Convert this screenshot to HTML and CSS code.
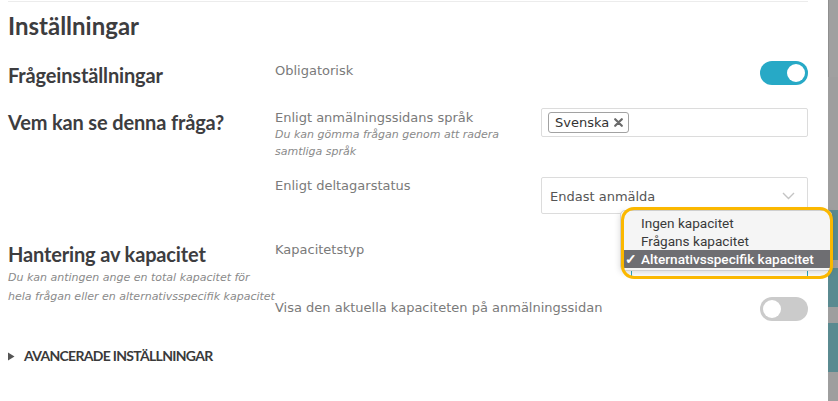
FILE: index.html
```html
<!DOCTYPE html>
<html lang="sv">
<head>
<meta charset="utf-8">
<title>Inställningar</title>
<link rel="stylesheet" href="styles.css">
</head>
<body>
<div class="page">
  <main class="panel">
    <div class="panel-inner">
      <h1 class="title">Inställningar</h1>

      <section class="group group-1">
        <div class="group-head"><h2 class="group-title">Frågeinställningar</h2></div>
        <div class="fields">
          <div class="field">
            <div class="label-cell"><span class="label">Obligatorisk</span></div>
            <div class="control control-right"><span class="toggle toggle-on"><span class="knob"></span></span></div>
          </div>
        </div>
      </section>

      <section class="group group-2">
        <div class="group-head"><h2 class="group-title">Vem kan se denna fråga?</h2></div>
        <div class="fields">
          <div class="field">
            <div class="label-cell">
              <span class="label">Enligt anmälningssidans språk</span>
              <p class="hint">Du kan gömma frågan genom att radera samtliga språk</p>
            </div>
            <div class="control">
              <div class="tag-input">
                <span class="tag">Svenska
                  <svg class="tag-x" width="9" height="9" viewBox="0 0 9 9"><path d="M1.2 1.2 L7.8 7.8 M7.8 1.2 L1.2 7.8" stroke="#6a6a6a" stroke-width="2.2" stroke-linecap="round"/></svg>
                </span>
              </div>
            </div>
          </div>
          <div class="field field-2b">
            <div class="label-cell pad1"><span class="label">Enligt deltagarstatus</span></div>
            <div class="control">
              <div class="select">
                <span class="select-value">Endast anmälda</span>
                <svg class="chevron" width="13" height="8" viewBox="0 0 13 8"><path d="M1 1 L6.5 6.5 L12 1" fill="none" stroke="#c4c4c4" stroke-width="1.4"/></svg>
              </div>
            </div>
          </div>
        </div>
      </section>

      <section class="group group-3">
        <div class="group-head">
          <h2 class="group-title">Hantering av kapacitet</h2>
          <p class="hint hint-wide">Du kan antingen ange en total kapacitet för hela frågan eller en alternativsspecifik kapacitet</p>
        </div>
        <div class="fields">
          <div class="field">
            <div class="label-cell"><span class="label">Kapacitetstyp</span></div>
            <div class="control control-right">
              <div class="select select-focus"></div>
            </div>
          </div>
          <div class="field field-3b">
            <div class="label-cell pad3"><span class="label">Visa den aktuella kapaciteten på anmälningssidan</span></div>
            <div class="control control-right"><span class="toggle"><span class="knob"></span></span></div>
          </div>
        </div>
      </section>

      <div class="advanced">
        <svg class="caret" width="7" height="9" viewBox="0 0 7 9"><path d="M0 0.5 L6.5 4.5 L0 8.5 Z" fill="#555"/></svg>
        <span class="advanced-text">AVANCERADE INSTÄLLNINGAR</span>
      </div>
    </div>
  </main>

  <aside class="strip">
    <div class="seg seg-thumb"></div>
    <div class="seg seg-gray s1"></div>
    <div class="seg seg-teal s2"></div>
    <div class="seg seg-gray s3"></div>
    <div class="seg seg-teal s4"></div>
    <div class="seg seg-gray s5"></div>
    <div class="seg seg-teal s6"></div>
    <div class="seg seg-gray s7"></div>
  </aside>

  <div class="menu">
    <div class="menu-item">Ingen kapacitet</div>
    <div class="menu-item">Frågans kapacitet</div>
    <div class="menu-item menu-item-selected"><span class="check">✓</span>Alternativsspecifik kapacitet</div>
  </div>
  <div class="focus-ring"></div>
</div>
</body>
</html>
```

FILE: styles.css
```css
* { box-sizing: border-box; }

html, body {
  margin: 0;
  padding: 0;
  background: #fff;
}

.page {
  position: relative;
  display: flex;
  width: 838px;
  height: 401px;
  overflow: hidden;
}

.panel {
  flex: none;
  width: 828px;
  padding: 1px 20px 0 8px;
  background: #fff;
}

.panel-inner {
  border-top: 1px solid #ececec;
}

.title {
  margin: 9px 0 0;
  font-family: Lato, "Liberation Sans", sans-serif;
  font-weight: 700;
  font-size: 24px;
  line-height: 30px;
  color: #3d3d3f;
}

.group {
  display: grid;
  grid-template-columns: 267px 1fr;
}

.group-1 { margin-top: 20px; }
.group-2 { margin-top: 21px; }
.group-3 { margin-top: 26px; }

.group-title {
  margin: 0;
  padding-top: 2px;
  font-family: Lato, "Liberation Sans", sans-serif;
  font-weight: 700;
  font-size: 20px;
  letter-spacing: -0.15px;
  line-height: 24px;
  color: #3d3d3f;
}

.fields {
  display: flex;
  flex-direction: column;
}

.field {
  display: grid;
  grid-template-columns: 266px 267px;
  align-items: start;
}

.field-2b { margin-top: 17px; }
.field-3b { margin-top: 19px; }

.label-cell { padding-top: 2px; }
.label-cell.pad1 { padding-top: 1px; }
.label-cell.pad3 { padding-top: 3px; }

.label {
  display: block;
  font-family: "DejaVu Sans", Verdana, sans-serif;
  font-size: 13px;
  line-height: 16px;
  color: #7a7a7a;
  white-space: nowrap;
}

.hint {
  margin: 0;
  font-family: "DejaVu Sans", Verdana, sans-serif;
  font-style: italic;
  font-size: 11px;
  line-height: 17px;
  color: #8a8a8a;
  width: 240px;
}

.hint-wide {
  margin-top: 2px;
  width: 267px;
  line-height: 19px;
  white-space: normal;
}

.control { display: flex; }
.control-right { justify-content: flex-end; }

.toggle {
  position: relative;
  display: block;
  width: 48px;
  height: 24px;
  border-radius: 12px;
  background: #cbcbcb;
}

.toggle .knob {
  position: absolute;
  top: 3px;
  left: 3px;
  width: 18px;
  height: 18px;
  border-radius: 50%;
  background: #fff;
}

.toggle-on { background: #27a9c6; }
.toggle-on .knob { left: 27px; }

.tag-input {
  width: 267px;
  height: 29px;
  border: 1px solid #dcdcdc;
  border-radius: 2px;
  padding: 3px 0 0 6px;
}

.tag {
  display: inline-flex;
  align-items: center;
  height: 21px;
  padding: 0 5px 0 6px;
  border: 1px solid #a2a2a2;
  border-radius: 3px;
  font-family: "DejaVu Sans", Verdana, sans-serif;
  font-size: 13px;
  color: #333;
}

.tag-x { margin-left: 5px; }

.select {
  display: flex;
  align-items: center;
  justify-content: space-between;
  width: 267px;
  height: 37px;
  border: 1px solid #dcdcdc;
  border-radius: 2px;
  padding: 0 8px 0 8px;
}

.select-value {
  font-family: "DejaVu Sans", Verdana, sans-serif;
  font-size: 13px;
  color: #555;
  padding-top: 1px;
}

.chevron { margin-right: 4px; margin-top: 1px; }

.select-focus {
  margin-top: 1px;
  width: 177px;
  border-color: #2aa8c4;
}

.advanced {
  display: flex;
  align-items: center;
  margin-top: 26px;
  height: 18px;
}

.caret { margin-right: 9px; }

.advanced-text {
  font-family: Lato, "Liberation Sans", sans-serif;
  font-weight: 700;
  font-size: 14px;
  letter-spacing: -0.7px;
  line-height: 18px;
  color: #3a3a3a;
}

/* right side strip */
.strip {
  flex: 1;
  display: flex;
  flex-direction: column;
  background: #9e9e9e;
}

.seg { flex: none; }
.seg-gray { background: #9e9e9e; }
.seg-teal { background: #5a8a90; }
.seg-thumb {
  height: 77px;
  background: #a0a0a0;
  border-left: 1px solid #8f8f8f;
}
.s1 { height: 133px; }
.s2 { height: 50px; }
.s3 { height: 8px; }
.s4 { height: 39px; }
.s5 { height: 16px; }
.s6 { height: 49px; }
.s7 { height: 29px; }

/* open dropdown menu */
.menu {
  position: absolute;
  left: 620px;
  top: 210px;
  width: 212px;
  height: 61px;
  padding: 3px 1px 0;
  background: #f5f5f5;
  border: 1px solid #cfcfcf;
  border-radius: 5px;
  box-shadow: 0 2px 6px rgba(0, 0, 0, 0.15);
  font-family: Roboto, "Liberation Sans", sans-serif;
  font-size: 13.6px;
  line-height: 18px;
  color: #3a3a3a;
}

.menu-item {
  height: 18px;
  padding-left: 19px;
  white-space: nowrap;
}

.menu-item-selected {
  position: relative;
  background: #6e6e72;
  color: #fff;
  font-weight: 500;
}

.check {
  position: absolute;
  left: 3px;
  top: 0;
  font-weight: 700;
  font-size: 14px;
}

.focus-ring {
  position: absolute;
  left: 621px;
  top: 207px;
  width: 212px;
  height: 72px;
  border: 3px solid #fbb800;
  border-radius: 13px;
  pointer-events: none;
}
```
